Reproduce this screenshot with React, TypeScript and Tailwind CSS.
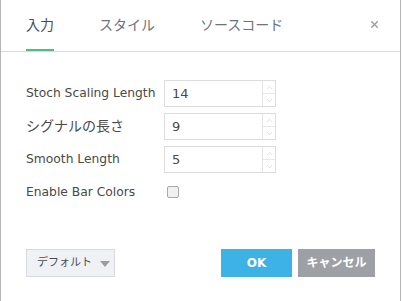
import { ChevronUp, ChevronDown, X } from "lucide-react";

const FONT = "font-['Tahoma','DejaVu_Sans','Noto_Sans_CJK_JP',sans-serif]";

const rows = [
  { label: "Stoch Scaling Length", value: "14", size: "text-[12.3px]" },
  { label: "シグナルの長さ", value: "9", size: "text-[14px]" },
  { label: "Smooth Length", value: "5", size: "text-[12.3px]" },
];

function NumberField({ value }: { value: string }) {
  return (
    <div className="flex h-[27px] w-[112px] border border-[#dcdcdc] bg-white">
      <div className="flex flex-1 items-center pl-[7px] text-[13px] text-[#4a4a4a]">{value}</div>
      <div className="flex w-[13px] flex-col border-l border-[#e4e4e4]">
        <div className="flex flex-1 items-center justify-center border-b border-[#e8e8e8] text-[#c4c4c4]">
          <ChevronUp className="h-[9px] w-[9px]" strokeWidth={1.5} />
        </div>
        <div className="flex flex-1 items-center justify-center text-[#c4c4c4]">
          <ChevronDown className="h-[9px] w-[9px]" strokeWidth={1.5} />
        </div>
      </div>
    </div>
  );
}

export default function App() {
  return (
    <div className={`h-[301px] w-[401px] border-x border-[#b5b5b5] bg-white ${FONT}`}>
      <div className="flex h-[52px] items-end border-b border-[#d9d9d9] pl-[25px] pr-[20px]">
        <div className="flex h-full flex-1 gap-[45px] text-[14px]">
          <div className="flex h-full flex-col justify-center border-b-2 border-[#53b987] pt-[1px] text-[#4a4e57]">
            入力
          </div>
          <div className="flex h-full flex-col justify-center pb-[1px] text-[#6f737c]">スタイル</div>
          <div className="flex h-full flex-col justify-center pb-[1px] text-[#6f737c]">ソースコード</div>
        </div>
        <div className="flex h-full items-center pb-[3px] text-[#9a9da5]">
          <X className="h-[11px] w-[11px]" strokeWidth={3} />
        </div>
      </div>

      <div className="flex flex-col gap-[6px] pl-[25px] pt-[28px]">
        {rows.map((r) => (
          <div key={r.label} className="flex items-center">
            <div className={`w-[138px] whitespace-nowrap text-[#4a4a4a] ${r.size}`}>{r.label}</div>
            <NumberField value={r.value} />
          </div>
        ))}
        <div className="flex h-[26px] items-center">
          <div className="w-[141px] whitespace-nowrap text-[12.3px] text-[#4a4a4a]">Enable Bar Colors</div>
          <div className="h-[12px] w-[12px] rounded-[2px] border border-[#a8a8a8] bg-[#f0f0f0]" />
        </div>
      </div>

      <div className="mt-[44px] flex items-center pl-[25px] pr-[25px]">
        <button className="flex h-[28px] w-[89px] items-center gap-[8px] whitespace-nowrap border border-[#d8dadf] bg-[#f0f1f5] pl-[10px] text-[11px] text-[#4a4a4a]">
          デフォルト
          <span className="mt-[1px] h-0 w-0 border-x-[5px] border-t-[6px] border-x-transparent border-t-[#9a9ca3]" />
        </button>
        <div className="ml-auto flex gap-[6px]">
          <button className="h-[28px] w-[71px] bg-[#3cb3e4] text-[12px] font-bold text-white">OK</button>
          <button className="h-[28px] w-[77px] whitespace-nowrap bg-[#9ea0a6] text-[12px] font-bold text-white">
            キャンセル
          </button>
        </div>
      </div>
    </div>
  );
}
